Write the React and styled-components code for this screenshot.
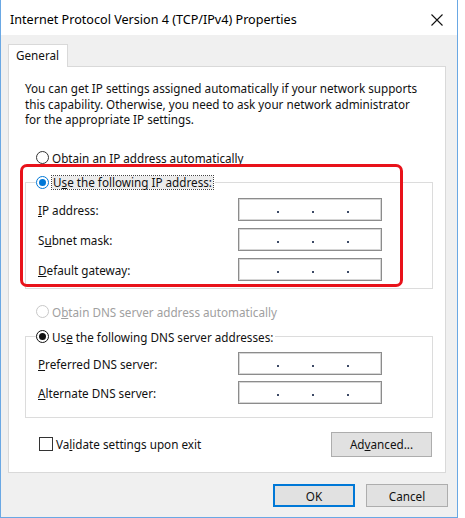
import React from 'react';
import styled, { createGlobalStyle } from 'styled-components';

const Global = createGlobalStyle`
  html, body { margin: 0; padding: 0; background: #ffffff; }
  body {
    font-family: "Noto Sans", "Open Sans", sans-serif;
    font-size: 11.7px;
    color: #111;
  }
  * { box-sizing: border-box; }
`;

const Window = styled.div`
  width: 458px;
  height: 518px;
  border: 1px solid #6aa8e4;
  border-top: none;
  background: #f0f0f0;
  display: flex;
  flex-direction: column;
`;

const TitleBar = styled.div`
  height: 35px;
  background: #ffffff;
  display: flex;
  align-items: center;
  justify-content: space-between;
  padding: 4px 14px 0 9px;
  flex-shrink: 0;
`;

const Title = styled.div`
  font-size: 12.6px;
  color: #000;
`;

const Body = styled.div`
  flex: 1;
  padding: 9px 10px 0 7px;
  display: flex;
  flex-direction: column;
`;

const TabStrip = styled.div`
  display: flex;
  height: 22px;
`;

const Tab = styled.div`
  width: 60px;
  height: 23px;
  background: #ffffff;
  border: 1px solid #d9d9d9;
  border-bottom: none;
  padding: 2px 0 0 7px;
  position: relative;
  z-index: 1;
`;

const Panel = styled.div`
  position: relative;
  height: 407px;
  margin-right: 1px;
  background: #ffffff;
  border: 1px solid #d9d9d9;
  padding: 14px 12px 0 16px;
  display: flex;
  flex-direction: column;
`;

const Description = styled.p`
  margin: 0;
  line-height: 15.5px;
`;

const OptionRow = styled.label`
  display: flex;
  align-items: center;
  gap: 3px;
  height: 16px;
  margin: ${p => p.$mt || 0}px 0 0 11px;
  color: ${p => (p.$disabled ? '#a0a0a0' : '#111')};
`;

const Radio = styled.span`
  width: 13px;
  height: 13px;
  border-radius: 50%;
  border: 1px solid ${p => p.$color};
  background: #fff;
  display: flex;
  align-items: center;
  justify-content: center;
  flex-shrink: 0;
  &::after {
    content: '';
    width: 7px;
    height: 7px;
    border-radius: 50%;
    background: ${p => (p.$checked ? p.$color : 'transparent')};
  }
`;

const FocusText = styled.span`
  outline: 1px dotted #444;
  outline-offset: 0;
  background: #ececec;
  padding: 0 1px;
  line-height: 13px;
`;

const GroupBox = styled.fieldset`
  margin: 9px 0 0 0;
  padding: 7px 0 ${p => p.$pb}px 12px;
  border: 1px solid #dcdcdc;
  min-width: 0;
`;

const Legend = styled.legend`
  padding: 0 2px 0 0;
  margin-left: -2px;
  display: flex;
  align-items: center;
  gap: 3px;
  height: 16px;
`;

const Fields = styled.div`
  display: grid;
  grid-template-columns: 200px 144px;
  row-gap: ${p => p.$gap}px;
  align-items: center;
`;

const FieldLabel = styled.span`
  padding-top: 1px;
`;

const IpBox = styled.div`
  width: 144px;
  height: 23px;
  border: 1px solid #8c8c8c;
  box-shadow: inset 0 0 0 1px #d6d6d6;
  background: #fff;
  display: flex;
  align-items: center;
  padding-left: 6px;
`;

const Segment = styled.span`
  width: 31px;
`;

const Dot = styled.span`
  width: 4px;
  display: flex;
  justify-content: center;
  margin-top: 5px;
  &::after {
    content: '';
    width: 2px;
    height: 2px;
    background: #3d4a66;
  }
`;

const BottomRow = styled.div`
  display: flex;
  align-items: center;
  justify-content: space-between;
  margin: 14px 1px 0 14px;
`;

const CheckLabel = styled.label`
  display: flex;
  align-items: center;
  gap: 3px;
`;

const CheckBox = styled.span`
  width: 14px;
  height: 14px;
  border: 1px solid #333;
  background: #fff;
  flex-shrink: 0;
`;

const Button = styled.button`
  font-family: inherit;
  font-size: 11.7px;
  color: #111;
  width: ${p => p.$w}px;
  height: ${p => p.$h}px;
  background: #e1e1e1;
  border: ${p => (p.$default ? '2px solid #0078d7' : '1px solid #adadad')};
  padding: 0;
  display: flex;
  align-items: center;
  justify-content: center;
`;

const Footer = styled.div`
  display: flex;
  justify-content: flex-end;
  gap: 11px;
  margin-top: 11px;
  margin-right: -1px;
`;

const Highlight = styled.div`
  position: absolute;
  left: 11px;
  top: 97px;
  width: 383px;
  height: 123px;
  border: 3px solid #e8121a;
  border-radius: 7px;
  pointer-events: none;
`;

const IpInput = () => (
  <IpBox>
    <Segment /><Dot /><Segment /><Dot /><Segment /><Dot /><Segment />
  </IpBox>
);

const CloseIcon = () => (
  <svg width="12" height="12" viewBox="0 0 12 12">
    <path d="M0.5 0.5 L11.5 11.5 M11.5 0.5 L0.5 11.5" stroke="#111" strokeWidth="1.1" fill="none" />
  </svg>
);

export default function App() {
  return (
    <>
      <Global />
      <Window>
        <TitleBar>
          <Title>Internet Protocol Version 4 (TCP/IPv4) Properties</Title>
          <CloseIcon />
        </TitleBar>
        <Body>
          <TabStrip>
            <Tab>General</Tab>
          </TabStrip>
          <Panel>
            <Description>
              You can get IP settings assigned automatically if your network supports<br />
              this capability. Otherwise, you need to ask your network administrator<br />
              for the appropriate IP settings.
            </Description>

            <OptionRow $mt={22}>
              <Radio $color="#333" />
              <span><u>O</u>btain an IP address automatically</span>
            </OptionRow>

            <GroupBox $pb={7}>
              <Legend>
                <Radio $color="#0078d7" $checked />
                <FocusText>U<u>s</u>e the following IP address:</FocusText>
              </Legend>
              <Fields $gap={7}>
                <FieldLabel><u>I</u>P address:</FieldLabel>
                <IpInput />
                <FieldLabel>S<u>u</u>bnet mask:</FieldLabel>
                <IpInput />
                <FieldLabel><u>D</u>efault gateway:</FieldLabel>
                <IpInput />
              </Fields>
            </GroupBox>

            <OptionRow $mt={15} $disabled>
              <Radio $color="#c8c8c8" />
              <span>O<u>b</u>tain DNS server address automatically</span>
            </OptionRow>

            <GroupBox $pb={13}>
              <Legend>
                <Radio $color="#111" $checked />
                <span>Us<u>e</u> the following DNS server addresses:</span>
              </Legend>
              <Fields $gap={6}>
                <FieldLabel><u>P</u>referred DNS server:</FieldLabel>
                <IpInput />
                <FieldLabel><u>A</u>lternate DNS server:</FieldLabel>
                <IpInput />
              </Fields>
            </GroupBox>

            <BottomRow>
              <CheckLabel>
                <CheckBox />
                <span>Va<u>l</u>idate settings upon exit</span>
              </CheckLabel>
              <Button $w={101} $h={25}>Ad<u>v</u>anced...</Button>
            </BottomRow>

            <Highlight />
          </Panel>
          <Footer>
            <Button $w={82} $h={23} $default>OK</Button>
            <Button $w={82} $h={23}>Cancel</Button>
          </Footer>
        </Body>
      </Window>
    </>
  );
}
